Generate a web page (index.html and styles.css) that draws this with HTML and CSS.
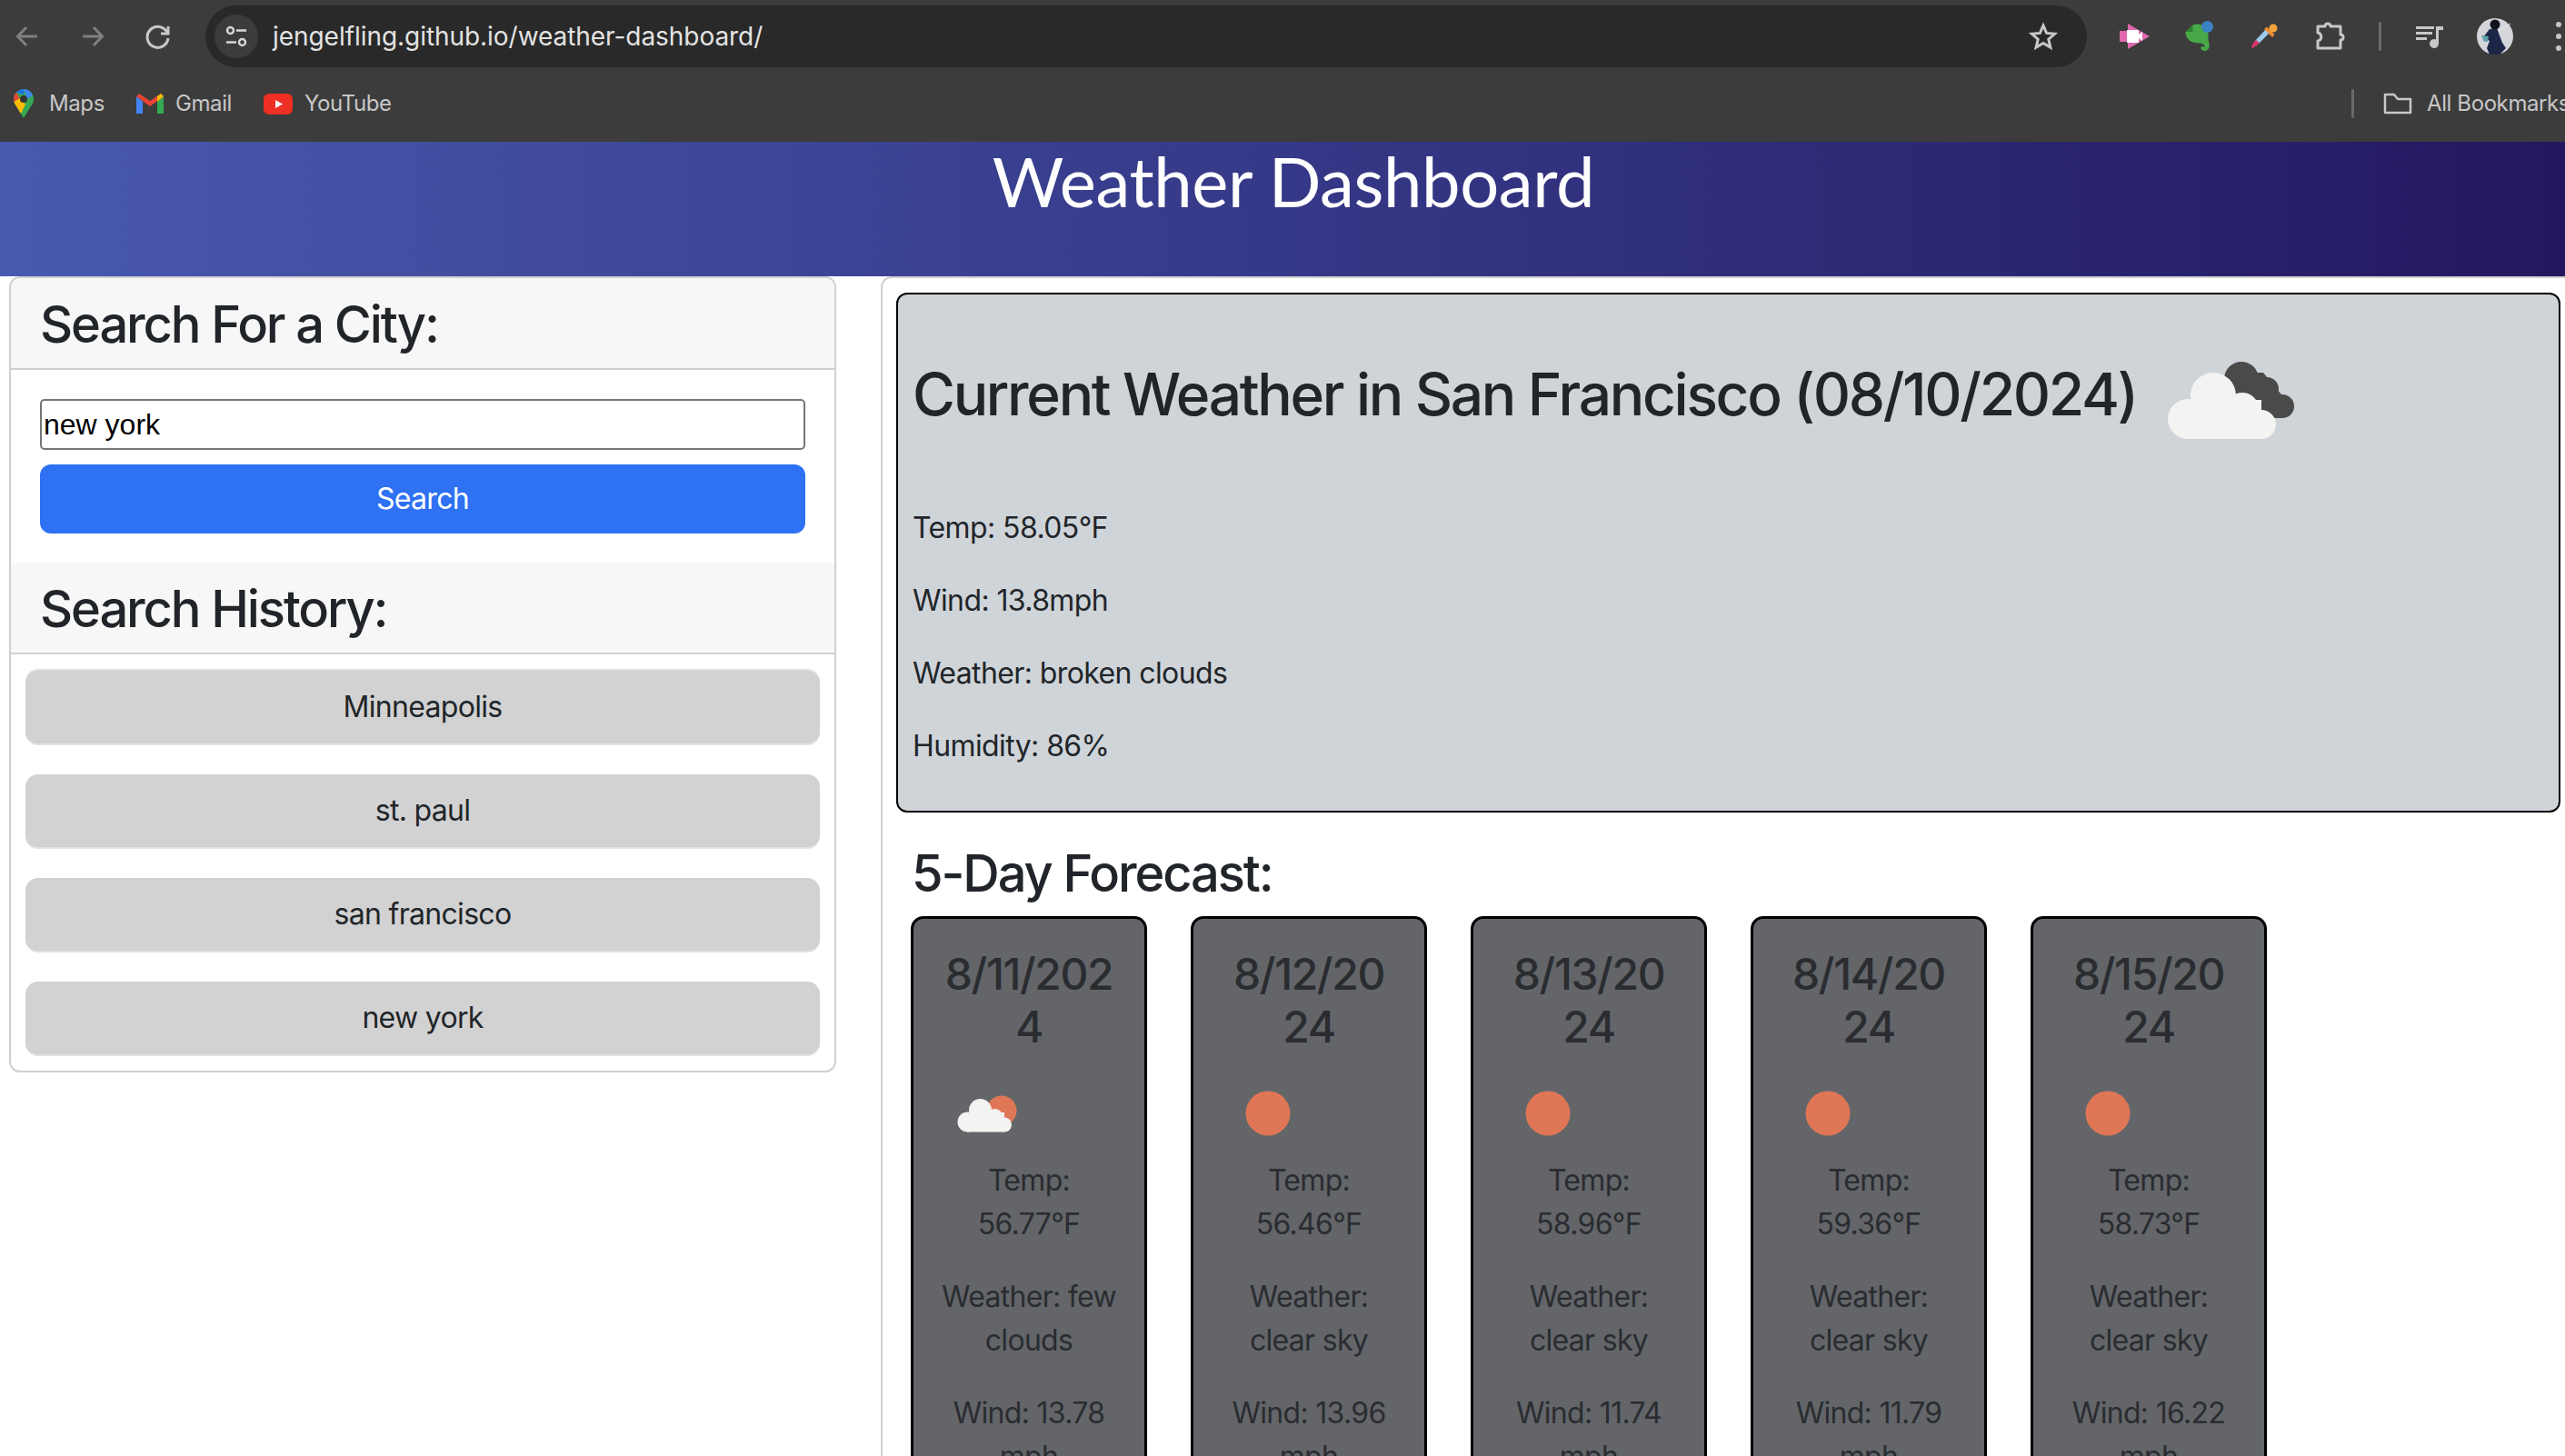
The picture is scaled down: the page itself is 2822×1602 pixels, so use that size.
FILE: index.html
```html
<!DOCTYPE html>
<html lang="en">
<head>
<meta charset="utf-8">
<title>Weather Dashboard</title>
<link rel="stylesheet" href="styles.css">
</head>
<body>
<div class="browser">
  <div class="toolbar">
    <div class="nav">
      <span class="tool"><svg width="30" height="30" viewBox="0 0 30 30" fill="none" stroke="#7f7f7f" stroke-width="3"><path d="M26 15H5M14 5L4.500 15 14 25"/></svg></span>
      <span class="tool"><svg width="30" height="30" viewBox="0 0 30 30" fill="none" stroke="#7f7f7f" stroke-width="3"><path d="M4 15H25M16 5L25.500 15 16 25"/></svg></span>
      <span class="tool"><svg width="30" height="30" viewBox="0 0 30 30" fill="none" stroke="#c7c7c7" stroke-width="3"><path d="M25 11A11.500 11.500 0 1 0 26 17"/><path d="M26 4V12H18" /></svg></span>
    </div>
    <div class="omnibox">
      <span class="chip"><svg width="26" height="26" viewBox="0 0 26 26" fill="none" stroke="#d6d6d6" stroke-width="2.500"><circle cx="6.500" cy="6.500" r="3.500"/><path d="M13 6.500H24M2 19.500H13"/><circle cx="19.500" cy="19.500" r="3.500"/></svg></span>
      <span class="url">jengelfling.github.io/weather-dashboard/</span>
      <svg class="star" width="32" height="32" viewBox="0 0 32 32" fill="none" stroke="#c7c7c7" stroke-width="3"><path d="M16 4l3.600 8.400 9.100.8-6.900 6 2.100 8.900L16 23.400 8.100 28.100l2.100-8.900-6.900-6 9.100-.8z"/></svg>
    </div>
    <div class="extensions">
      <span class="ext"><svg width="34" height="30" viewBox="0 0 34 30"><path d="M10 1l24 14-24 14z" fill="#e066ae"/><rect x="1" y="9" width="14" height="12" fill="#e066ae"/><rect x="9" y="8" width="13" height="14" fill="#fff"/><path d="M22 13l4-3v10l-4-3z" fill="#fff"/></svg></span>
      <span class="ext"><svg width="34" height="34" viewBox="0 0 34 34"><path d="M2 12l7-7c3-2 7-2 10-.5 5 2 7 5 7.500 9.500.3 3-.5 6 .5 9 .8 3 1.500 5-.5 8-2.500 3-7 2.500-8-.5-.7-2.500 2-3.500 3-2 .5 1 1.500 0 .5-2-1-1.500-3.500-2-6-2-5-.5-9-1-12-5-2-2.500-2.500-5-2.500-7.500z" fill="#46a847"/><path d="M2.500 12H9.500V5z" fill="#2f7d30"/><circle cx="25.500" cy="6.500" r="6.500" fill="#3b82c4"/></svg></span>
      <span class="ext"><svg width="30" height="30" viewBox="0 0 30 30"><path d="M20 11L8 23l-4-3L16 7z" fill="#9dcbee"/><path d="M9 22l-3 3-5 3-1-2 3-5 2-2z" fill="#d9366b"/><path d="M14 7l9 9 2.500-3L17 4.500z" fill="#ef8f2f"/><circle cx="24" cy="6" r="4.500" fill="#f2a23c"/></svg></span>
      <span class="ext"><svg width="34" height="34" viewBox="0 0 34 34" fill="none" stroke="#c7c7c7" stroke-width="3"><path d="M3 6h8c0-4 6-4 6 0h11v9c4 0 4 6 0 6v9H3v-8c5-1 5-8 0-9z" stroke-linejoin="round"/></svg></span>
      <span class="divider-slot"><span class="divider"></span></span>
      <span class="ext"><svg width="32" height="32" viewBox="0 0 32 32" fill="#c7c7c7"><rect x="1" y="5" width="20" height="3"/><rect x="1" y="11" width="18" height="3"/><rect x="1" y="17" width="12" height="3"/><path d="M23 5h8v4h-5v15a5 5 0 1 1-3-4.500z"/></svg></span>
      <span class="ext"><svg width="40" height="40" viewBox="0 0 40 40"><circle cx="20" cy="20" r="20" fill="#d4d6db"/><path d="M14 12l8-1 6 16 4 6-7 7H14l-3-7 3-8-7-4z" fill="#1c2748"/><circle cx="20" cy="7" r="5.500" fill="#12131a"/><path d="M5 19l8 1-1 6-4 0z" fill="#5ea3a8"/><path d="M24 14L37 6" stroke="#eee" stroke-width="1"/></svg></span>
      <span class="ext ext-last"><span class="dots"><i></i><i></i><i></i></span></span>
    </div>
  </div>
  <div class="bookmarks">
    <a class="bookmark"><svg width="26" height="32" viewBox="0 0 26 32"><path d="M11 0C5 0 0 5 0 11c0 3 1 5 3 8l8 13 8-13c2-3 3-5 3-8 0-6-5-11-11-11z" fill="#34a853"/><path d="M3 4a11 11 0 0 1 8-4v6z" fill="#1a73e8"/><path d="M11 0a11 11 0 0 1 10 7l-6 4-2-5z" fill="#4285f4"/><path d="M3 3.500a11 11 0 0 0-3 7.500c0 1 .2 2 .5 3l6-4z" fill="#ea4335"/><path d="M.5 14c.5 2 1.500 3.500 2.500 5l5 8 5-10-6-7z" fill="#fbbc04"/><circle cx="11" cy="11" r="4" fill="#333"/></svg><span>Maps</span></a>
    <a class="bookmark"><svg width="30" height="22" viewBox="0 0 30 22"><path d="M0 3v19h7V9z" fill="#4285f4"/><path d="M30 3v19h-7V9z" fill="#34a853"/><path d="M0 3l15 11L30 3 27 0 15 8 3 0z" fill="#ea4335"/><path d="M23 9V3l4-3 3 3z" fill="#fbbc04"/></svg><span>Gmail</span></a>
    <a class="bookmark"><svg width="32" height="23" viewBox="0 0 32 23"><rect width="32" height="23" rx="6" fill="#ee2f24"/><path d="M13 7l8 4.500-8 4.500z" fill="#fff"/></svg><span>YouTube</span></a>
    <div class="all-bookmarks">
      <span class="divider"></span>
      <svg width="32" height="24" viewBox="0 0 32 24" fill="none" stroke="#c7c7c7" stroke-width="2.500"><path d="M2 2h10l4 5h14v15H2z" stroke-linejoin="round"/></svg>
      <span>All Bookmarks</span>
    </div>
  </div>
</div>

<header class="banner"><h1>Weather Dashboard</h1></header>

<main class="layout">
  <aside class="panel search-panel">
    <div class="panel-head"><h3>Search For a City:</h3></div>
    <form class="search-form">
      <input class="city-input" type="text" value="new york">
      <button class="search-btn" type="button">Search</button>
    </form>
    <div class="panel-head"><h3>Search History:</h3></div>
    <div class="history">
      <button class="history-btn history-btn-focus" type="button">Minneapolis</button>
      <button class="history-btn" type="button">st. paul</button>
      <button class="history-btn" type="button">san francisco</button>
      <button class="history-btn" type="button">new york</button>
    </div>
  </aside>

  <section class="panel results">
    <div class="current">
      <div class="current-head">
        <h2>Current Weather in San Francisco (08/10/2024)</h2>
        <svg class="icon-large" viewBox="0 0 100 100">
          <g fill="#4a4a4a"><circle cx="56" cy="38.500" r="9.500"/><circle cx="70" cy="44" r="6.500"/><circle cx="78.500" cy="53.500" r="6.500"/><path d="M48 35h20l10 12v13H60z"/></g>
          <g fill="#f3f3f2"><circle cx="40.500" cy="47.500" r="12.500"/><circle cx="26.500" cy="60.500" r="11"/><circle cx="56.500" cy="55" r="9"/><circle cx="67" cy="63.500" r="8"/><rect x="26" y="50" width="41" height="21.500"/></g>
        </svg>
      </div>
      <p>Temp: 58.05°F</p>
      <p>Wind: 13.8mph</p>
      <p>Weather: broken clouds</p>
      <p>Humidity: 86%</p>
    </div>

    <h3 class="forecast-title">5-Day Forecast:</h3>
    <div class="forecast">
      <article class="day">
        <h4>8/11/202<br>4</h4>
        <svg class="icon-small" viewBox="0 0 100 100">
          <circle cx="65" cy="47" r="16.500" fill="#df7757"/>
          <g fill="#f3f3f2" transform="translate(1 -1)"><circle cx="40.500" cy="47.500" r="12.500"/><circle cx="26.500" cy="60.500" r="11"/><circle cx="56.500" cy="55" r="9"/><circle cx="67" cy="63.500" r="8"/><rect x="26" y="50" width="41" height="21.500"/></g>
        </svg>
        <p>Temp:<br>56.77°F</p>
        <p>Weather: few<br>clouds</p>
        <p>Wind: 13.78<br>mph</p>
      </article>
      <article class="day">
        <h4>8/12/20<br>24</h4>
        <svg class="icon-small" viewBox="0 0 100 100"><circle cx="50" cy="50" r="24.500" fill="#df7757"/></svg>
        <p>Temp:<br>56.46°F</p>
        <p>Weather:<br>clear sky</p>
        <p>Wind: 13.96<br>mph</p>
      </article>
      <article class="day">
        <h4>8/13/20<br>24</h4>
        <svg class="icon-small" viewBox="0 0 100 100"><circle cx="50" cy="50" r="24.500" fill="#df7757"/></svg>
        <p>Temp:<br>58.96°F</p>
        <p>Weather:<br>clear sky</p>
        <p>Wind: 11.74<br>mph</p>
      </article>
      <article class="day">
        <h4>8/14/20<br>24</h4>
        <svg class="icon-small" viewBox="0 0 100 100"><circle cx="50" cy="50" r="24.500" fill="#df7757"/></svg>
        <p>Temp:<br>59.36°F</p>
        <p>Weather:<br>clear sky</p>
        <p>Wind: 11.79<br>mph</p>
      </article>
      <article class="day">
        <h4>8/15/20<br>24</h4>
        <svg class="icon-small" viewBox="0 0 100 100"><circle cx="50" cy="50" r="24.500" fill="#df7757"/></svg>
        <p>Temp:<br>58.73°F</p>
        <p>Weather:<br>clear sky</p>
        <p>Wind: 16.22<br>mph</p>
      </article>
    </div>
  </section>
</main>
</body>
</html>
```
FILE: styles.css
```css
* { box-sizing: border-box; }
html, body { margin: 0; height: 100%; overflow: hidden; }
body {
  display: flex;
  flex-direction: column;
  height: 1602px;
  background: #fff;
  color: #212529;
  font-family: Inter, "Liberation Sans", sans-serif;
  font-size: 32px;
  line-height: 48px;
}
h1, h2, h3, h4, p { margin: 0; }

/* browser chrome */
.browser { flex: none; height: 156px; background: #3c3c3c; color: #c7c7c7; }
.toolbar { display: flex; align-items: center; height: 80px; }
.nav { flex: none; display: flex; gap: 32px; padding-left: 10px; }
.tool { display: flex; align-items: center; justify-content: center; width: 40px; height: 40px; }
.omnibox {
  flex: 1;
  display: flex;
  align-items: center;
  height: 68px;
  margin-left: 32px;
  padding: 0 32px 0 10px;
  border-radius: 34px;
  background: #292929;
}
.chip {
  flex: none;
  display: flex;
  align-items: center;
  justify-content: center;
  width: 48px;
  height: 48px;
  border-radius: 50%;
  background: #3c3c3c;
}
.url { flex: 1; margin-left: 16px; font-size: 28px; line-height: 40px; letter-spacing: -0.05px; color: #e3e3e3; }
.star { flex: none; }
.extensions { flex: none; display: flex; align-items: center; width: 526px; padding-left: 16px; }
.ext { flex: none; display: flex; align-items: center; justify-content: center; width: 72px; height: 48px; }
.ext-last { width: 68px; }
.divider-slot { flex: none; display: flex; justify-content: center; width: 37px; }
.divider { display: block; width: 3px; height: 32px; border-radius: 2px; background: #6a6a6a; }
.dots { display: flex; flex-direction: column; gap: 7px; }
.dots i { display: block; width: 6px; height: 6px; border-radius: 50%; background: #c7c7c7; }

.bookmarks { display: flex; align-items: center; height: 68px; padding-left: 15px; font-size: 24px; line-height: 32px; letter-spacing: -0.4px; white-space: nowrap; }
.bookmark { flex: none; display: flex; align-items: center; gap: 13px; margin-right: 35px; }
.all-bookmarks { display: flex; align-items: center; margin-left: auto; width: 235px; flex: none; overflow: hidden; }
.all-bookmarks svg { flex: none; margin-left: 32px; margin-right: 16px; }
.all-bookmarks .divider { flex: none; }

/* banner */
.banner {
  flex: none;
  height: 148px;
  padding-left: 24px;
  text-align: center;
  color: #fff;
  background: linear-gradient(to right, #4859ae, #231860);
}
.banner h1 { font-family: Lato, sans-serif; font-weight: 400; font-size: 76px; line-height: 86px; letter-spacing: -0.4px; }

/* layout */
.layout {
  flex: 1;
  min-height: 0;
  display: grid;
  grid-template-columns: 910px 1fr;
  column-gap: 49px;
  align-items: start;
  padding-left: 10px;
}
.panel { border: 2px solid #d0d0d0; border-radius: 12px; background: #fff; }
.search-panel { overflow: hidden; }
.panel-head { height: 101px; padding: 18px 32px 0; background: #f7f7f7; border-bottom: 2px solid #d0d0d0; }
h3 { font-size: 56px; line-height: 67px; font-weight: 500; letter-spacing: -2.1px; }
.search-form { display: flex; flex-direction: column; gap: 16px; padding: 32px 32px 32px; }
.city-input {
  display: block;
  width: 100%;
  height: 56px;
  padding: 0 2px;
  border: 2px solid #767676;
  border-radius: 5px;
  background: #fff;
  font-family: "Liberation Sans", Arial, sans-serif;
  font-size: 32px;
  color: #000;
}
.search-btn {
  height: 76px;
  border: 0;
  border-radius: 12px;
  background: #2e71f3;
  color: #fff;
  font: 400 32px/48px Inter, sans-serif;
  letter-spacing: -0.7px;
}
.history { display: flex; flex-direction: column; gap: 32px; padding: 18px 16px 16px; }
.history-btn {
  height: 82px;
  border: 0;
  border-bottom: 2px solid #dee2e6;
  border-radius: 14px;
  background: #d2d2d2;
  color: #212529;
  font: 400 32px/48px Inter, sans-serif;
  letter-spacing: -0.7px;
}
.history-btn-focus { box-shadow: 0 -2px 0 #dee2e6; }

/* results */
.results {
  height: 1298px;
  margin-right: -13px;
  border-bottom: 0;
  border-right: 0;
  border-radius: 12px 0 0 0;
  padding: 16px 18px 0 15px;
  overflow: hidden;
}
.current { height: 572px; padding: 16px; border: 2px solid #000; border-radius: 12px; background: #cfd4d9; }
.current-head { display: flex; align-items: center; height: 200px; margin-bottom: 17px; }
.current-head h2 { flex: none; margin-bottom: 14px; font-size: 64px; line-height: 77px; font-weight: 500; letter-spacing: -2.3px; white-space: nowrap; }
.icon-large { flex: none; width: 200px; height: 200px; margin-left: 3px; }
.current p { margin-bottom: 32px; letter-spacing: -0.6px; }

.forecast-title { margin: 34px 0 13px 17px; }
.forecast { display: flex; gap: 48px; margin-left: 16px; }
.day {
  flex: none;
  width: 260px;
  padding: 32px 30px;
  border: 3px solid #000;
  border-radius: 14px;
  background: #636569;
  color: #2a2c30;
  text-align: center;
  white-space: nowrap;
}
.day h4 { margin-bottom: 17px; font-size: 48px; line-height: 57.6px; font-weight: 500; letter-spacing: -1.4px; }
.day p { margin-bottom: 32px; letter-spacing: -0.7px; }
.icon-small { display: block; width: 100px; height: 100px; margin-left: 2px; }
```
